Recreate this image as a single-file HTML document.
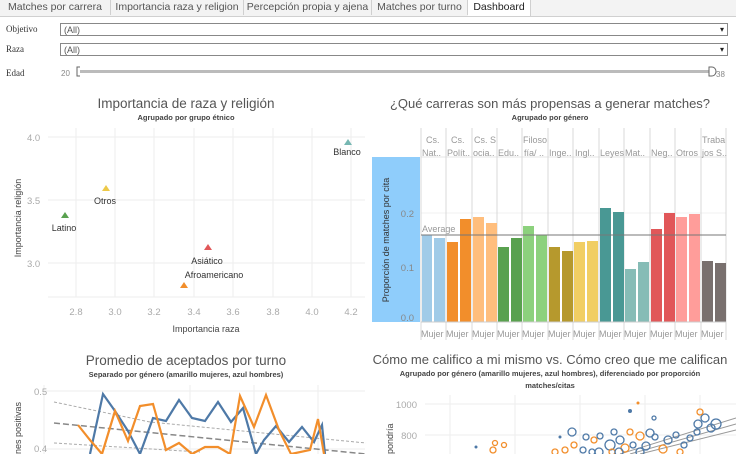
<!DOCTYPE html>
<html><head><meta charset="utf-8"><style>
body{margin:0;width:736px;height:454px;overflow:hidden;background:#fff;font-family:"Liberation Sans",sans-serif;position:relative}
.tabs{position:absolute;left:0;top:0;width:736px;height:16px;background:#f3f3f3;border-bottom:1px solid #d0d0d0}
.tab{position:absolute;top:0;height:15px;font-size:10.5px;color:#555;line-height:15px;text-align:center;border-right:1px solid #d0d0d0}
.lab{position:absolute;left:6px;font-family:"Liberation Serif",serif;font-size:9px;color:#333}
.dd{position:absolute;left:60px;height:13px;border:1px solid #888;font-size:9px;color:#555;line-height:12px;padding-left:3px;box-sizing:border-box;width:668px}
.dd:after{content:"▾";position:absolute;right:3px;top:0;font-size:8px;color:#222}
</style></head><body>
<div class="tabs">
<div class="tab" style="left:0;width:110px">Matches por carrera</div>
<div class="tab" style="left:111px;width:132px">Importancia raza y religion</div>
<div class="tab" style="left:244px;width:127px">Percepción propia y ajena</div>
<div class="tab" style="left:372px;width:95px">Matches por turno</div>
<div class="tab" style="left:468px;width:62px;background:#fff;color:#222;height:16px">Dashboard</div>
</div>
<div class="lab" style="top:24px">Objetivo</div>
<div class="dd" style="top:23px">(All)</div>
<div class="lab" style="top:44px">Raza</div>
<div class="dd" style="top:43px">(All)</div>
<div class="lab" style="top:68px">Edad</div>
<svg width="736" height="454" style="position:absolute;left:0;top:0" font-family="Liberation Sans, sans-serif">
<text x="61" y="76" font-size="8" fill="#888">20</text>
<rect x="78" y="70" width="634" height="3" fill="#bbb"/>
<path d="M80 67 h-3 v9 h3" fill="#fff" stroke="#666"/>
<path d="M709 67 h3 a4 4.5 0 0 1 0 9 h-3z" fill="#fff" stroke="#666"/>
<text x="716" y="77" font-size="8" fill="#888">38</text>

<!-- scatter -->
<text x="186" y="108" font-size="13.5" fill="#555" text-anchor="middle">Importancia de raza y religión</text>
<text x="186" y="120" font-size="7.5" fill="#444" text-anchor="middle" font-weight="bold">Agrupado por grupo étnico</text>
<g stroke="#eee">
<line x1="48" y1="137" x2="365" y2="137"/><line x1="48" y1="200" x2="365" y2="200"/><line x1="48" y1="263" x2="365" y2="263"/><line x1="48" y1="297" x2="365" y2="297"/>
<line x1="76" y1="128" x2="76" y2="297"/><line x1="115" y1="128" x2="115" y2="297"/><line x1="154" y1="128" x2="154" y2="297"/><line x1="194" y1="128" x2="194" y2="297"/><line x1="233" y1="128" x2="233" y2="297"/><line x1="273" y1="128" x2="273" y2="297"/><line x1="312" y1="128" x2="312" y2="297"/><line x1="351" y1="128" x2="351" y2="297"/>
</g>
<g font-size="9.5" fill="#aaa"><text x="27" y="141">4.0</text><text x="27" y="204">3.5</text><text x="27" y="267">3.0</text>
<g text-anchor="middle"><text x="76" y="315">2.8</text><text x="115" y="315">3.0</text><text x="154" y="315">3.2</text><text x="194" y="315">3.4</text><text x="233" y="315">3.6</text><text x="273" y="315">3.8</text><text x="312" y="315">4.0</text><text x="351" y="315">4.2</text></g></g>
<text x="206" y="332" font-size="9" fill="#444" text-anchor="middle">Importancia raza</text>
<text transform="translate(21,218) rotate(-90)" font-size="9" fill="#444" text-anchor="middle">Importancia religión</text>
<path d="M348 139l-4 6h8z" fill="#76b7b2"/><text x="347" y="155" font-size="9" fill="#333" text-anchor="middle">Blanco</text>
<path d="M106 185l-4 6h8z" fill="#edc948"/><text x="105" y="204" font-size="9" fill="#333" text-anchor="middle">Otros</text>
<path d="M65 212l-4 6h8z" fill="#59a14f"/><text x="64" y="231" font-size="9" fill="#333" text-anchor="middle">Latino</text>
<path d="M208 244l-4 6h8z" fill="#e15759"/><text x="207" y="264" font-size="9" fill="#333" text-anchor="middle">Asiático</text>
<text x="214" y="278" font-size="9" fill="#333" text-anchor="middle">Afroamericano</text>
<path d="M184 282l-4 6h8z" fill="#f28e2b"/>

<!-- bars -->
<text x="550" y="108" font-size="13" fill="#555" text-anchor="middle">¿Qué carreras son más propensas a generar matches?</text>
<text x="550" y="120" font-size="7.5" fill="#444" text-anchor="middle" font-weight="bold">Agrupado por género</text>
<rect x="372" y="157" width="48" height="165" fill="#8fcdfb"/>
<text transform="translate(389,240) rotate(-90)" font-size="9" fill="#333" text-anchor="middle">Proporción de matches por cita</text>
<g font-size="9.5" fill="#888" text-anchor="end"><text x="414" y="217">0.2</text><text x="414" y="271">0.1</text><text x="414" y="321">0.0</text></g>
<line x1="421" y1="157" x2="726" y2="157" stroke="#e6e6e6"/>
<line x1="421" y1="213" x2="726" y2="213" stroke="#f0f0f0"/>
<g stroke="#d8d8d8">
<line x1="421" y1="128" x2="421" y2="340"/><line x1="446" y1="128" x2="446" y2="340"/><line x1="472" y1="128" x2="472" y2="340"/><line x1="497" y1="128" x2="497" y2="340"/><line x1="522" y1="128" x2="522" y2="340"/><line x1="548" y1="128" x2="548" y2="340"/><line x1="573" y1="128" x2="573" y2="340"/><line x1="599" y1="128" x2="599" y2="340"/><line x1="624" y1="128" x2="624" y2="340"/><line x1="650" y1="128" x2="650" y2="340"/><line x1="675" y1="128" x2="675" y2="340"/><line x1="701" y1="128" x2="701" y2="340"/><line x1="726" y1="128" x2="726" y2="340"/>
</g>
<g font-size="9" fill="#999">
<text x="426" y="143">Cs.</text><text x="422" y="156">Nat..</text>
<text x="451" y="143">Cs.</text><text x="447" y="156">Polít..</text>
<text x="474" y="143">Cs. S</text><text x="473" y="156">ocia..</text>
<text x="498" y="156">Edu..</text>
<text x="523" y="143">Filoso</text><text x="524" y="156">fía/ ..</text>
<text x="549" y="156">Inge..</text><text x="575" y="156">Ingl..</text><text x="600" y="156">Leyes</text><text x="625" y="156">Mat..</text><text x="651" y="156">Neg..</text><text x="676" y="156">Otros</text>
<text x="702" y="143">Traba</text><text x="702" y="156">jos S..</text>
</g>
<g>
<rect x="422" y="235" width="10" height="87" fill="#a0cbe8"/><rect x="434" y="238" width="11" height="84" fill="#a0cbe8"/>
<rect x="447" y="242" width="11" height="80" fill="#f28e2b"/><rect x="460" y="219" width="11" height="103" fill="#f28e2b"/>
<rect x="473" y="217" width="11" height="105" fill="#ffbe7d"/><rect x="486" y="223" width="11" height="99" fill="#ffbe7d"/>
<rect x="498" y="247" width="11" height="75" fill="#59a14f"/><rect x="511" y="238" width="11" height="84" fill="#59a14f"/>
<rect x="523" y="226" width="11" height="96" fill="#8cd17d"/><rect x="536" y="235" width="11" height="87" fill="#8cd17d"/>
<rect x="549" y="247" width="11" height="75" fill="#b6992d"/><rect x="562" y="251" width="11" height="71" fill="#b6992d"/>
<rect x="574" y="242" width="11" height="80" fill="#f1ce63"/><rect x="587" y="241" width="11" height="81" fill="#f1ce63"/>
<rect x="600" y="208" width="11" height="114" fill="#499894"/><rect x="613" y="212" width="11" height="110" fill="#499894"/>
<rect x="625" y="269" width="11" height="53" fill="#86bcb6"/><rect x="638" y="262" width="11" height="60" fill="#86bcb6"/>
<rect x="651" y="229" width="11" height="93" fill="#e15759"/><rect x="664" y="213" width="11" height="109" fill="#e15759"/>
<rect x="676" y="217" width="11" height="105" fill="#ff9d9a"/><rect x="689" y="214" width="11" height="108" fill="#ff9d9a"/>
<rect x="702" y="261" width="11" height="61" fill="#79706e"/><rect x="715" y="263" width="11" height="59" fill="#79706e"/>
</g>
<line x1="421" y1="235" x2="726" y2="235" stroke="#777" stroke-width="1"/>
<text x="422" y="232" font-size="9" fill="#999">Average</text>
<line x1="421" y1="322" x2="726" y2="322" stroke="#ccc"/>
<g font-size="9" fill="#999" textLength="25"><text x="421" y="337">Mujer</text><text x="446" y="337">Mujer</text><text x="472" y="337">Mujer</text><text x="497" y="337">Mujer</text><text x="522" y="337">Mujer</text><text x="548" y="337">Mujer</text><text x="573" y="337">Mujer</text><text x="599" y="337">Mujer</text><text x="624" y="337">Mujer</text><text x="650" y="337">Mujer</text><text x="675" y="337">Mujer</text><text x="701" y="337">Mujer</text></g>

<!-- line chart -->
<text x="186" y="365" font-size="13.5" fill="#555" text-anchor="middle">Promedio de aceptados por turno</text>
<text x="186" y="377" font-size="7.5" fill="#444" text-anchor="middle" font-weight="bold">Separado por género (amarillo mujeres, azul hombres)</text>
<g stroke="#eee"><line x1="44" y1="391" x2="365" y2="391"/><line x1="44" y1="449" x2="365" y2="449"/><line x1="44" y1="385" x2="44" y2="454"/><line x1="190" y1="385" x2="190" y2="454"/><line x1="254" y1="385" x2="254" y2="454"/><line x1="318" y1="385" x2="318" y2="454"/></g>
<g font-size="9.5" fill="#aaa"><text x="34" y="395">0.5</text><text x="34" y="452">0.4</text></g>
<text transform="translate(21,454) rotate(-90)" font-size="9" fill="#444">nes positivas</text>
<path d="M54 402 L150 422 L366 443" stroke="#aaa" fill="none" stroke-dasharray="3,2"/>
<path d="M54 423 L366 454" stroke="#888" fill="none" stroke-width="1.5" stroke-dasharray="6,3"/>
<path d="M54 443 L200 452" stroke="#aaa" fill="none" stroke-dasharray="3,2"/>
<polyline points="90,454 103,394 115,411 128,431 140,454 153,418 166,421 179,400 192,418 205,421 218,402 231,422 243,408 256,454 264,440 276,426 289,442 302,427 314,442 322,425 325,454" fill="none" stroke="#4e79a7" stroke-width="2.2"/>
<polyline points="78,425 90,440 102,454 115,411 128,441 140,406 153,404 166,450 179,443 192,454 205,447 218,447 230,454 240,396 254,427 266,395 279,430 291,454 310,450 318,419 324,454" fill="none" stroke="#f28e2b" stroke-width="2.2"/>

<!-- bubble chart -->
<text x="550" y="364" font-size="13" fill="#555" text-anchor="middle">Cómo me califico a mi mismo vs. Cómo creo que me califican</text>
<text x="550" y="376" font-size="7.5" fill="#444" text-anchor="middle" font-weight="bold">Agrupado por género (amarillo mujeres, azul hombres), diferenciado por proporción</text>
<text x="550" y="388" font-size="7.5" fill="#444" text-anchor="middle" font-weight="bold">matches/citas</text>
<g stroke="#eee"><line x1="425" y1="404" x2="736" y2="404"/><line x1="425" y1="435" x2="736" y2="435"/><line x1="450" y1="395" x2="450" y2="454"/><line x1="515" y1="395" x2="515" y2="454"/><line x1="580" y1="395" x2="580" y2="454"/><line x1="645" y1="395" x2="645" y2="454"/><line x1="700" y1="395" x2="700" y2="454"/></g>
<g font-size="9.5" fill="#aaa" text-anchor="end"><text x="417" y="408">1000</text><text x="417" y="439">800</text></g>
<text transform="translate(393,454) rotate(-90)" font-size="9" fill="#444">pondría</text>
<path d="M620 454 L736 418 M630 454 L736 424 M640 454 L736 430" stroke="#999" fill="none"/>
<g fill="none" stroke-width="1.3">
<circle cx="572" cy="432" r="4" stroke="#4e79a7"/><circle cx="586" cy="437" r="3" stroke="#4e79a7"/><circle cx="594" cy="440" r="3" stroke="#f28e2b"/><circle cx="610" cy="445" r="5" stroke="#4e79a7"/><circle cx="620" cy="440" r="4" stroke="#4e79a7"/><circle cx="625" cy="448" r="4" stroke="#f28e2b"/><circle cx="633" cy="445" r="3" stroke="#4e79a7"/><circle cx="640" cy="436" r="4" stroke="#f28e2b"/><circle cx="646" cy="446" r="4" stroke="#4e79a7"/><circle cx="655" cy="437" r="3" stroke="#4e79a7"/><circle cx="663" cy="449" r="4" stroke="#f28e2b"/><circle cx="668" cy="440" r="4" stroke="#4e79a7"/><circle cx="684" cy="445" r="3" stroke="#4e79a7"/><circle cx="698" cy="424" r="4" stroke="#4e79a7"/><circle cx="705" cy="418" r="4" stroke="#4e79a7"/><circle cx="700" cy="412" r="3" stroke="#f28e2b"/><circle cx="493" cy="450" r="3" stroke="#f28e2b"/><circle cx="612" cy="452" r="3" stroke="#f28e2b"/><circle cx="654" cy="418" r="2" stroke="#4e79a7"/><circle cx="599" cy="452" r="4" stroke="#4e79a7"/>
<circle cx="574" cy="445" r="3" stroke="#f28e2b"/><circle cx="583" cy="450" r="3" stroke="#4e79a7"/><circle cx="592" cy="452" r="3" stroke="#4e79a7"/><circle cx="600" cy="436" r="3" stroke="#4e79a7"/><circle cx="614" cy="432" r="3" stroke="#4e79a7"/><circle cx="619" cy="452" r="4" stroke="#4e79a7"/><circle cx="630" cy="432" r="3" stroke="#f28e2b"/><circle cx="640" cy="452" r="4" stroke="#4e79a7"/><circle cx="650" cy="433" r="4" stroke="#4e79a7"/><circle cx="676" cy="435" r="3" stroke="#4e79a7"/><circle cx="680" cy="452" r="3" stroke="#f28e2b"/><circle cx="690" cy="438" r="3" stroke="#4e79a7"/><circle cx="711" cy="428" r="4" stroke="#4e79a7"/><circle cx="716" cy="424" r="5" stroke="#4e79a7"/><circle cx="697" cy="432" r="3" stroke="#4e79a7"/><circle cx="495" cy="443" r="2.5" stroke="#f28e2b"/><circle cx="504" cy="445" r="2.5" stroke="#f28e2b"/><circle cx="555" cy="452" r="3" stroke="#f28e2b"/><circle cx="565" cy="450" r="3" stroke="#f28e2b"/>
</g>
<circle cx="638" cy="403" r="1.5" fill="#f28e2b"/><circle cx="630" cy="411" r="2" fill="#4e79a7"/><circle cx="476" cy="447" r="1.5" fill="#4e79a7"/><circle cx="560" cy="437" r="1.5" fill="#4e79a7"/>
</svg>
</body></html>
